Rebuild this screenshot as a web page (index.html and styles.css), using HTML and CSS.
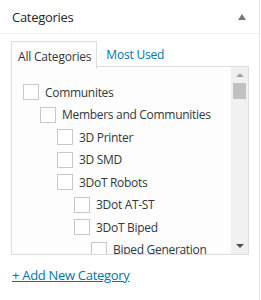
FILE: index.html
```html
<!DOCTYPE html>
<html lang="en">

<head>
    <meta charset="UTF-8">
    <meta name="viewport" content="width=device-width, initial-scale=1.0">
    <title>Categories</title>
    <link rel="stylesheet" href="styles.css">
</head>

<body>
    <div class="postbox">
        <div class="hndle">
            <h2>Categories</h2>
            <span class="toggle"></span>
        </div>
        <div class="inside">
            <ul class="tabs">
                <li class="active"><a href="">All Categories</a></li>
                <li><a href="">Most Used</a></li>
            </ul>
            <div class="panel">
                <ul class="checklist">
                    <li class="lv0"><span class="cb"></span>Communites</li>
                    <li class="lv1"><span class="cb"></span>Members and Communities</li>
                    <li class="lv2"><span class="cb"></span>3D Printer</li>
                    <li class="lv2"><span class="cb"></span>3D SMD</li>
                    <li class="lv2"><span class="cb"></span>3DoT Robots</li>
                    <li class="lv3"><span class="cb"></span>3Dot AT-ST</li>
                    <li class="lv3"><span class="cb"></span>3DoT Biped</li>
                    <li class="lv4"><span class="cb"></span>Biped Generation</li>
                </ul>
                <div class="scrollbar">
                    <span class="arrow up"></span>
                    <span class="thumb"></span>
                    <span class="arrow down"></span>
                </div>
            </div>
            <a class="add-new" href="">+ Add New Category</a>
        </div>
    </div>
</body>

</html>
```

FILE: styles.css
```css
body,
h2,
ul,
li {
    margin: 0;
    padding: 0;
    font-weight: normal;
    list-style: none;
}

body {
    font-family: "Open Sans", "Noto Sans", sans-serif;
    font-size: 12px;
    color: #444;
    background: #fff;
}

a {
    text-decoration: none;
}

.postbox {
    width: 259px;
    height: 300px;
    border-right: 1px solid #e5e5e5;
    background: #fff;
}

.hndle {
    height: 33px;
    border-bottom: 1px solid #eee;
    display: flex;
    align-items: center;
    justify-content: space-between;
    padding: 0 12px;
}

.hndle h2 {
    font-size: 13px;
    color: #23282d;
    letter-spacing: -0.3px;
}

.toggle {
    width: 0;
    height: 0;
    border-left: 4px solid transparent;
    border-right: 4px solid transparent;
    border-bottom: 6px solid #72777c;
    margin-right: 1px;
}

.inside {
    padding: 7px 10px 0 11px;
}

.tabs {
    display: flex;
    height: 25px;
}

.tabs li {
    padding: 1px 5px 0 6px;
    display: flex;
    align-items: center;
    border: 1px solid transparent;
    border-bottom: 0;
    margin-right: 2px;
}

.tabs li.active {
    background: #fdfdfd;
    border-color: #ddd;
    margin-bottom: -1px;
    height: 26px;
}

.tabs a {
    color: #0073aa;
    letter-spacing: -0.2px;
}

.tabs li.active a {
    color: #32373c;
}

.panel {
    height: 187px;
    border: 1px solid #ddd;
    background: #fdfdfd;
    display: flex;
}

.checklist {
    flex: 1;
    padding: 14px 0 0 11px;
    overflow: hidden;
}

.checklist li {
    height: 22.5px;
    display: flex;
    align-items: center;
    color: #32373c;
    letter-spacing: -0.3px;
    white-space: nowrap;
}

.cb {
    width: 14px;
    height: 14px;
    border: 1px solid #c8c8c8;
    background: #fff;
    margin-right: 6px;
    flex: none;
}

.lv1 {
    margin-left: 17px;
}

.lv2 {
    margin-left: 34px;
}

.lv3 {
    margin-left: 51px;
}

.lv4 {
    margin-left: 68px;
}

.scrollbar {
    width: 17px;
    background: #f0f0f0;
    display: flex;
    flex-direction: column;
    align-items: center;
}

.thumb {
    width: 13px;
    height: 16px;
    background: #c1c1c1;
}

.arrow {
    width: 0;
    height: 0;
    border-left: 4px solid transparent;
    border-right: 4px solid transparent;
}

.arrow.up {
    border-bottom: 4px solid #a3a3a3;
    margin: 6px 0 6px;
}

.arrow.down {
    border-top: 4px solid #505050;
    margin-top: auto;
    margin-bottom: 6px;
}

.add-new {
    display: inline-block;
    margin-top: 11px;
    margin-left: 1px;
    font-size: 13px;
    color: #0073aa;
    text-decoration: underline;
    letter-spacing: -0.3px;
}
```
